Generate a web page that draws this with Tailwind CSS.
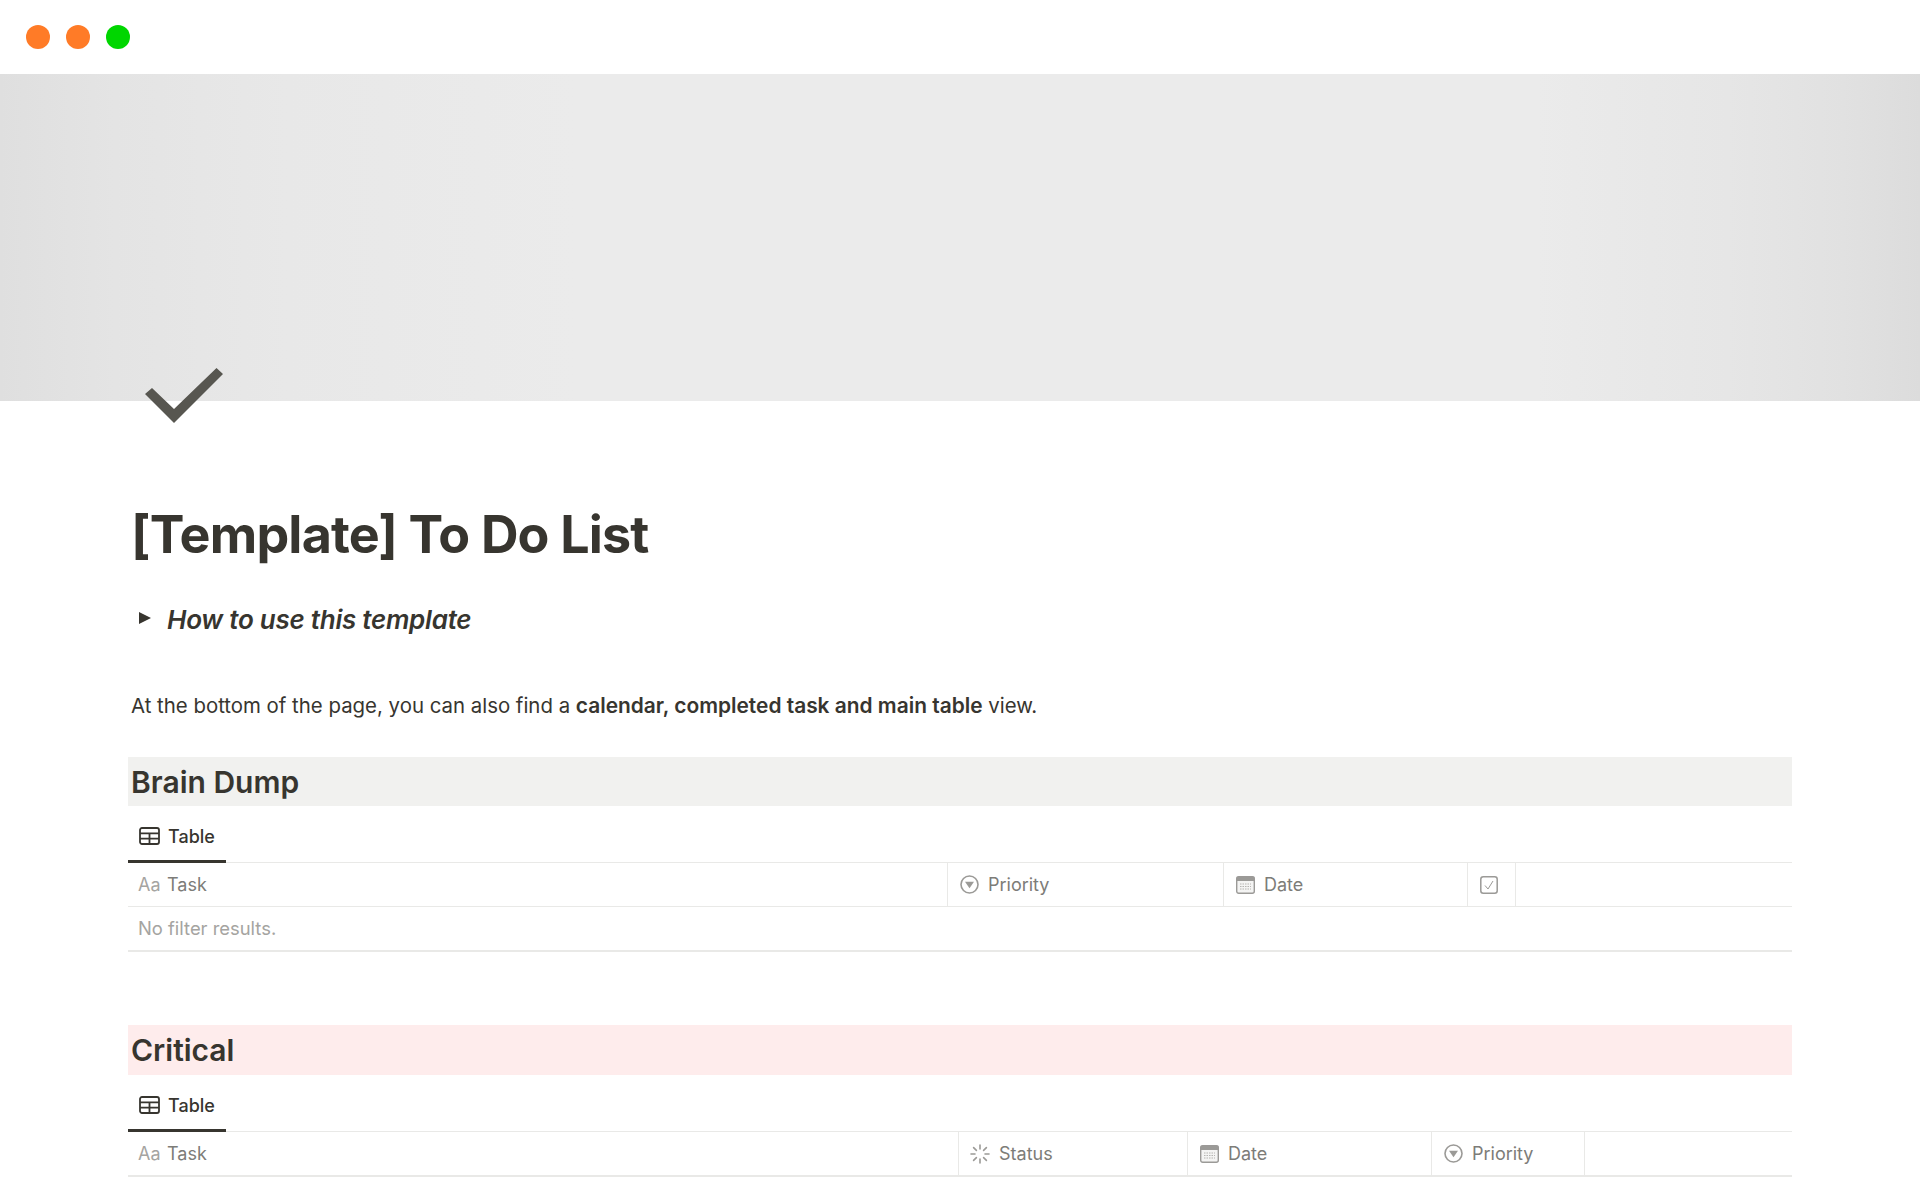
<!doctype html>
<html>
<head>
<meta charset="utf-8">
<script src="https://cdn.jsdelivr.net/npm/@tailwindcss/browser@4"></script>
</head>
<body class="bg-white">
<div class="w-[1920px] h-[1200px] overflow-hidden bg-white font-['Inter',sans-serif] text-[#37352f]">
  <header class="h-[74px] flex items-center gap-4 pl-[26px] pb-[1px]">
    <span class="w-6 h-6 rounded-full bg-[#ff7b27]"></span>
    <span class="w-6 h-6 rounded-full bg-[#ff7b27]"></span>
    <span class="w-6 h-6 rounded-full bg-[#00d600]"></span>
  </header>
  <div class="relative h-[327px] bg-[linear-gradient(90deg,#dfdfdf_0%,#e4e4e4_6%,#e8e8e8_15%,#ebebeb_30%,#ebebeb_80%,#e6e6e6_90%,#e1e1e1_96%,#dcdcdc_100%)]">
    <svg class="absolute left-[145px] top-[294px]" width="78" height="55" viewBox="0 0 78 55"><path d="M0 26 L7 20 L29 41 L71.5 0 L78 6 L29 55 Z" fill="#575650"/></svg>
  </div>
  <main class="px-[128px]">
    <h1 class="mt-[104px] pl-[3px] h-[60px] flex items-center text-[52px] font-bold leading-[60px] tracking-[-0.82px]">[Template] To Do List</h1>
    <div class="mt-[34px] flex items-center h-[40px] pl-[11px]">
      <svg width="12" height="12" viewBox="0 0 12 12" class="mr-[16px] mb-[2px]"><path d="M0 0 L12 6 L0 12 Z" fill="#37352f"/></svg>
      <span class="italic font-semibold text-[26px] tracking-[-0.25px]">How to use this template</span>
    </div>
    <p class="mt-[52px] pl-[3px] h-[30px] leading-[30px] text-[20.4px]">At the bottom of the page, you can also find a <b class="font-semibold text-[20.9px]">calendar, completed task and main table</b> view.</p>

    <h2 class="mt-[36px] h-[49px] pl-[3px] pt-[1px] flex items-center bg-[#f1f1ef] text-[30px] font-semibold">Brain Dump</h2>
    <div class="mt-[6px] h-[51px] flex items-stretch border-b border-[#e9e9e7]">
      <div class="w-[98px] -mb-px border-b-[3px] border-[#37352f] flex items-center pl-[11px] gap-[8px] text-[18px] font-medium">
        <svg width="21" height="18" viewBox="0 0 21 18" fill="none" stroke="#37352f" stroke-width="1.8"><rect x="1" y="1" width="19" height="16" rx="2"/><path d="M1 6.3H20M1 11.7H20M10.5 6.3V17"/></svg>
        <span>Table</span>
      </div>
    </div>
    <div class="h-[44px] flex items-stretch border-b border-[#e9e9e7] text-[18px] text-[#7d7c78]">
      <div class="w-[820px] border-r border-[#e9e9e7] flex items-center pl-[10px]">
        <span class="w-[29px] text-[#a5a4a1]">Aa</span><span>Task</span>
      </div>
      <div class="w-[276px] border-r border-[#e9e9e7] flex items-center pl-[12px] gap-[9px]">
        <svg width="19" height="19" viewBox="0 0 19 19" fill="none"><circle cx="9.5" cy="9.5" r="8.5" stroke="#9b9a97" stroke-width="1.6"/><path d="M5 6.8H14L9.5 13.2Z" fill="#9b9a97"/></svg>
        <span>Priority</span>
      </div>
      <div class="w-[244px] border-r border-[#e9e9e7] flex items-center pl-[12px] gap-[9px]">
        <svg width="19" height="18" viewBox="0 0 19 18"><rect x="0.7" y="0.7" width="17.6" height="16.6" rx="2" fill="#f4f4f3" stroke="#9b9a97" stroke-width="1.4"/><rect x="0.7" y="0.7" width="17.6" height="4.3" fill="#9b9a97"/><path d="M4 8h11M4 10.5h11M4 13h11" stroke="#b5b4b1" stroke-width="1.2" stroke-dasharray="1.5 1"/></svg>
        <span>Date</span>
      </div>
      <div class="w-[48px] border-r border-[#e9e9e7] flex items-center pl-[12px]">
        <svg width="18" height="18" viewBox="0 0 18 18" fill="none" stroke="#9b9a97"><rect x="0.8" y="0.8" width="16.4" height="16.4" rx="2.5" stroke-width="1.5"/><path d="M5 9.5L8 13L13 5" stroke-width="1"/></svg>
      </div>
    </div>
    <div class="h-[45px] flex items-center border-b-[2px] border-[#e9e9e7] pl-[10px] text-[18.4px] text-[#a5a4a1]">No filter results.</div>

    <h2 class="mt-[73px] h-[50px] pl-[3px] pt-[1px] flex items-center bg-[#feecec] text-[30px] font-semibold">Critical</h2>
    <div class="mt-[6px] h-[51px] flex items-stretch border-b border-[#e9e9e7]">
      <div class="w-[98px] -mb-px border-b-[3px] border-[#37352f] flex items-center pl-[11px] gap-[8px] text-[18px] font-medium">
        <svg width="21" height="18" viewBox="0 0 21 18" fill="none" stroke="#37352f" stroke-width="1.8"><rect x="1" y="1" width="19" height="16" rx="2"/><path d="M1 6.3H20M1 11.7H20M10.5 6.3V17"/></svg>
        <span>Table</span>
      </div>
    </div>
    <div class="h-[45px] flex items-stretch border-b-[2px] border-[#e9e9e7] text-[18px] text-[#7d7c78]">
      <div class="w-[831px] border-r border-[#e9e9e7] flex items-center pl-[10px]">
        <span class="w-[29px] text-[#a5a4a1]">Aa</span><span>Task</span>
      </div>
      <div class="w-[229px] border-r border-[#e9e9e7] flex items-center pl-[11px] gap-[9px]">
        <svg width="20" height="20" viewBox="0 0 20 20" fill="none" stroke="#9b9a97" stroke-width="1.6" stroke-linecap="round"><path d="M10 1V5M10 15V19M1 10H5M15 10H19M3.6 3.6L6.4 6.4M13.6 13.6L16.4 16.4M3.6 16.4L6.4 13.6M13.6 6.4L16.4 3.6"/></svg>
        <span>Status</span>
      </div>
      <div class="w-[244px] border-r border-[#e9e9e7] flex items-center pl-[12px] gap-[9px]">
        <svg width="19" height="18" viewBox="0 0 19 18"><rect x="0.7" y="0.7" width="17.6" height="16.6" rx="2" fill="#f4f4f3" stroke="#9b9a97" stroke-width="1.4"/><rect x="0.7" y="0.7" width="17.6" height="4.3" fill="#9b9a97"/><path d="M4 8h11M4 10.5h11M4 13h11" stroke="#b5b4b1" stroke-width="1.2" stroke-dasharray="1.5 1"/></svg>
        <span>Date</span>
      </div>
      <div class="w-[153px] border-r border-[#e9e9e7] flex items-center pl-[12px] gap-[9px]">
        <svg width="19" height="19" viewBox="0 0 19 19" fill="none"><circle cx="9.5" cy="9.5" r="8.5" stroke="#9b9a97" stroke-width="1.6"/><path d="M5 6.8H14L9.5 13.2Z" fill="#9b9a97"/></svg>
        <span>Priority</span>
      </div>
    </div>
  </main>
</div>
</body>
</html>
